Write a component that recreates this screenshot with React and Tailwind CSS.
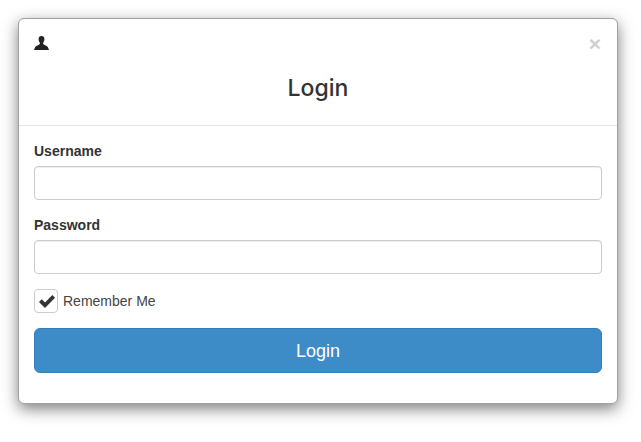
import React from 'react';

function UserIcon() {
  return (
    <svg width="15" height="14" viewBox="0 0 15 14" className="block">
      <path fill="#222" d="M7.500 0C5.600 0 4.600 1.200 4.600 3c0 1.300.4 2.600 1.100 3.500.4.600.3 1.300-.2 1.700C4.300 9.100 2 9.700 1.200 10.900.7 11.700.3 13 0 14h15c-.3-1-.7-2.300-1.200-3.100-.8-1.200-3.100-1.800-4.300-2.700-.5-.4-.6-1.100-.2-1.700.7-.9 1.100-2.200 1.100-3.500C10.400 1.200 9.400 0 7.500 0z" />
    </svg>
  );
}

function CheckIcon() {
  return (
    <svg width="16" height="13" viewBox="0 0 16 13" className="block ml-px">
      <path fill="#333" d="M6 13 0 7l2.700-2.700L6 7.600 13.300 0 16 2.700z" />
    </svg>
  );
}

function Field({ label }) {
  return (
    <div className="mb-[15px]">
      <label className="block mb-[5px] h-5 text-[14px] leading-5 font-bold text-[#333]">{label}</label>
      <input
        type="text"
        className="block w-full h-[34px] rounded-[4px] border border-[#ccc] bg-white shadow-[inset_0_1px_1px_rgba(0,0,0,0.075)]"
      />
    </div>
  );
}

export default function App() {
  return (
    <div className="w-[641px] h-[442px] bg-white pt-[18px] pl-[18px] font-['Liberation_Sans',Arial,sans-serif]">
      <div className="w-[600px] h-[386px] bg-white rounded-[6px] border border-[#a0a0a0] shadow-[0_5px_15px_rgba(0,0,0,0.5)]">
        <div className="relative h-[107px] border-b border-[#e5e5e5] px-[15px] pt-[17px]">
          <UserIcon />
          <button className="absolute top-[14px] right-[16px] text-[21px] leading-[21px] font-bold text-[#cfcfcf]">×</button>
          <h4 className="mt-[22px] text-center text-[23px] leading-[32px] font-medium text-[#333] font-['Inter',sans-serif]">Login</h4>
        </div>
        <div className="px-[15px] pt-[15px]">
          <Field label="Username" />
          <Field label="Password" />
          <div className="flex items-center gap-[5px] h-6">
            <span className="flex items-center justify-center w-6 h-6 rounded-[4px] border border-[#ccc] bg-white">
              <CheckIcon />
            </span>
            <span className="text-[14px] leading-5 text-[#444]">Remember Me</span>
          </div>
          <button className="mt-[15px] block w-full h-[45px] rounded-[6px] bg-[#3d8cc7] border border-[#357ebd] text-white text-[18px] leading-[24px]">
            Login
          </button>
        </div>
      </div>
    </div>
  );
}
